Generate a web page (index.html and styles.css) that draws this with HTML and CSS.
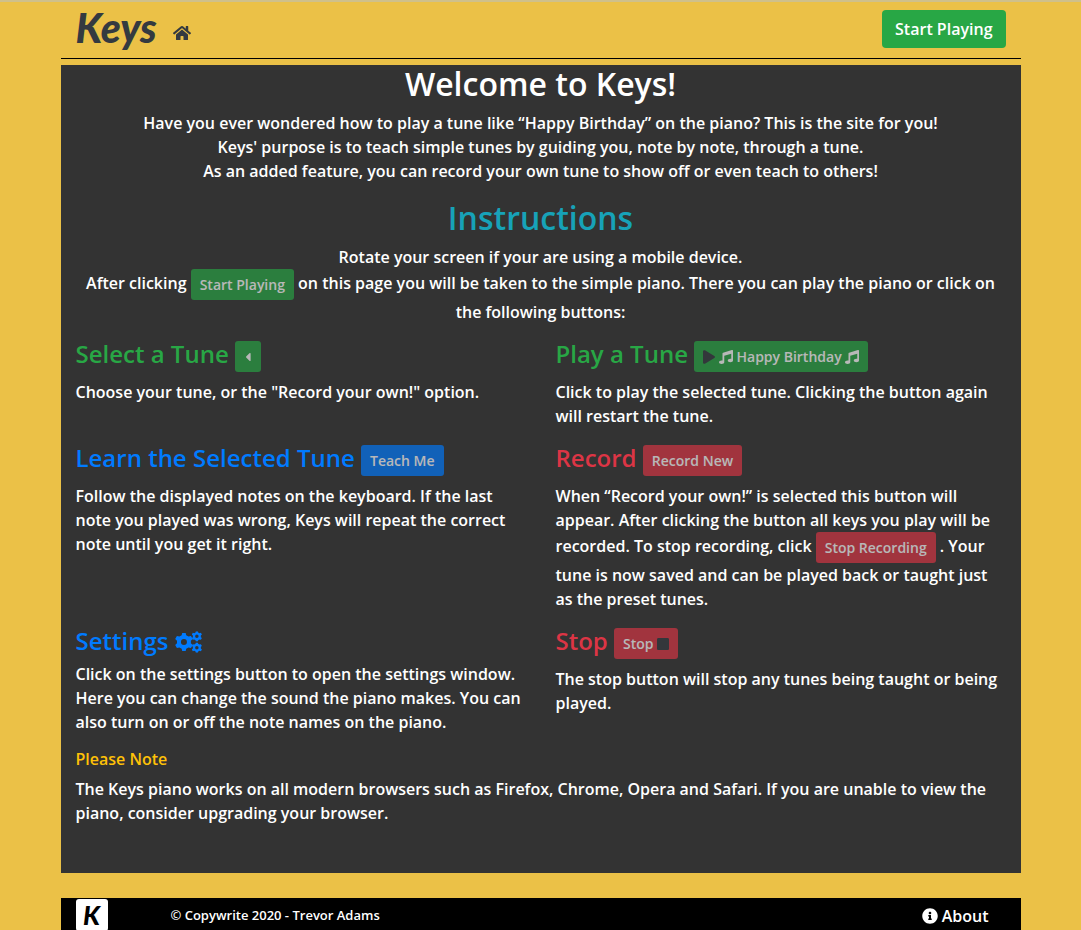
FILE: index.html
```html
<!DOCTYPE html>
<html lang="en">
<head>
<meta charset="utf-8">
<meta name="viewport" content="width=device-width, initial-scale=1">
<title>Keys</title>
<link rel="stylesheet" href="styles.css">
</head>
<body>
<svg class="sprite" aria-hidden="true">
  <symbol id="home" viewBox="0 0 576 512"><path d="M280.37 148.26L96 300.11V464a16 16 0 0 0 16 16l112.060-.29a16 16 0 0 0 15.920-16V368a16 16 0 0 1 16-16h64a16 16 0 0 1 16 16v95.640a16 16 0 0 0 16 16.050L464 480a16 16 0 0 0 16-16V300L295.670 148.260a12.190 12.190 0 0 0-15.300 0zM571.600 251.470L488 182.560V44.050a12 12 0 0 0-12-12h-56a12 12 0 0 0-12 12v72.610L318.470 43a48 48 0 0 0-61 0L4.340 251.470a12 12 0 0 0-1.600 16.900l25.500 31A12 12 0 0 0 45.150 301l235.220-193.740a12.190 12.190 0 0 1 15.300 0L530.900 301a12 12 0 0 0 16.900-1.600l25.500-31a12 12 0 0 0-1.700-16.930z"/></symbol>
  <symbol id="music" viewBox="0 0 512 512"><path d="M470.380 1.510L150.410 96A32 32 0 0 0 128 126.510v261.410A139 139 0 0 0 96 384c-53 0-96 28.660-96 64s43 64 96 64 96-28.660 96-64V214.320l256-75v184.610a138.400 138.400 0 0 0-32-3.930c-53 0-96 28.660-96 64s43 64 96 64 96-28.650 96-64V32a32 32 0 0 0-41.620-30.490z"/></symbol>
  <symbol id="play" viewBox="0 0 448 512"><path d="M424.400 214.700L72.400 6.600C43.800-10.300 0 6.100 0 47.900V464c0 37.500 40.700 60.100 72.400 41.300l352-208c31.400-18.500 31.500-64.100 0-82.600z"/></symbol>
  <symbol id="stop" viewBox="0 0 448 512"><path d="M400 32H48C21.500 32 0 53.500 0 80v352c0 26.500 21.500 48 48 48h352c26.500 0 48-21.500 48-48V80c0-26.500-21.500-48-48-48z"/></symbol>
  <symbol id="caret" viewBox="0 0 192 512"><path d="M192 127.300v257.400c0 17.800-21.500 26.700-34.100 14.100L29.200 270.100c-7.800-7.800-7.800-20.500 0-28.300l128.700-128.600c12.600-12.600 34.100-3.700 34.100 14.100z"/></symbol>
  <symbol id="info" viewBox="0 0 512 512"><path d="M256 8C119 8 8 119.100 8 256c0 137 111 248 248 248s248-111 248-248C504 119.100 393 8 256 8zm0 110c23.200 0 42 18.800 42 42s-18.800 42-42 42-42-18.800-42-42 18.800-42 42-42zm56 254c0 6.600-5.400 12-12 12h-88c-6.600 0-12-5.400-12-12v-24c0-6.600 5.400-12 12-12h12v-64h-12c-6.600 0-12-5.400-12-12v-24c0-6.600 5.400-12 12-12h64c6.600 0 12 5.400 12 12v100h12c6.600 0 12 5.400 12 12v24z"/></symbol>
  <symbol id="gear" viewBox="-98 -98 196 196"><path fill-rule="evenodd" d="M-19-98H19L25-73L50-59L77-67L96-33L76-15V15L96 33L77 67L50 59L25 73L19 98H-19L-25 73L-50 59L-77 67L-96 33L-76 15V-15L-96-33L-77-67L-50-59L-25-73ZM0-33A33 33 0 1 0 0 33A33 33 0 1 0 0-33Z"/></symbol>
  <symbol id="cogs" viewBox="0 0 640 512"><use href="#gear" x="0" y="44" width="424" height="424"/><use href="#gear" x="396" y="0" width="244" height="244"/><use href="#gear" x="396" y="268" width="244" height="244"/></symbol>
</svg>

<header class="container header">
  <a class="brand" href="#">Keys</a>
  <a class="home" href="#" aria-label="Home"><svg class="icon icon-home"><use href="#home"/></svg></a>
  <button class="btn btn-success start" type="button">Start Playing</button>
</header>

<main class="container main">
  <section class="intro">
    <h1 class="title">Welcome to Keys!</h1>
    <p>Have you ever wondered how to play a tune like “Happy Birthday” on the piano? This is the site for you!<br>Keys' purpose is to teach simple tunes by guiding you, note by note, through a tune.<br>As an added feature, you can record your own tune to show off or even teach to others!</p>
    <h2 class="title text-info">Instructions</h2>
    <p>Rotate your screen if your are using a mobile device.<br>After clicking <button class="btn btn-sm btn-success" type="button" disabled>Start Playing</button> on this page you will be taken to the simple piano. There you can play the piano or click on the following buttons:</p>
  </section>

  <div class="grid">
    <section>
      <h3 class="topic text-success">Select a Tune <button class="btn btn-sm btn-success" type="button" aria-label="Select a tune" disabled><svg class="icon icon-caret"><use href="#caret"/></svg></button></h3>
      <p>Choose your tune, or the "Record your own!" option.</p>
    </section>
    <section>
      <h3 class="topic text-success">Play a Tune <button class="btn btn-sm btn-success" type="button" disabled><svg class="icon icon-block dark"><use href="#play"/></svg> <svg class="icon icon-music"><use href="#music"/></svg> Happy Birthday <svg class="icon icon-music"><use href="#music"/></svg></button></h3>
      <p>Click to play the selected tune. Clicking the button again will restart the tune.</p>
    </section>
    <section>
      <h3 class="topic text-primary">Learn the Selected Tune <button class="btn btn-sm btn-primary" type="button" disabled>Teach Me</button></h3>
      <p>Follow the displayed notes on the keyboard. If the last note you played was wrong, Keys will repeat the correct note until you get it right.</p>
    </section>
    <section>
      <h3 class="topic text-danger">Record <button class="btn btn-sm btn-danger" type="button" disabled>Record New</button></h3>
      <p>When “Record your own!” is selected this button will appear. After clicking the button all keys you play will be recorded. To stop recording, click <button class="btn btn-sm btn-danger" type="button" disabled>Stop Recording</button> . Your tune is now saved and can be played back or taught just as the preset tunes.</p>
    </section>
    <section>
      <h3 class="topic text-primary">Settings <svg class="icon icon-cogs"><use href="#cogs"/></svg></h3>
      <p>Click on the settings button to open the settings window. Here you can change the sound the piano makes. You can also turn on or off the note names on the piano.</p>
    </section>
    <section>
      <h3 class="topic text-danger">Stop <button class="btn btn-sm btn-danger" type="button" disabled>Stop <svg class="icon icon-block dark"><use href="#stop"/></svg></button></h3>
      <p>The stop button will stop any tunes being taught or being played.</p>
    </section>
  </div>

  <h4 class="note text-warning">Please Note</h4>
  <p>The Keys piano works on all modern browsers such as Firefox, Chrome, Opera and Safari. If you are unable to view the piano, consider upgrading your browser.</p>
</main>

<footer class="container footer">
  <a class="badge" href="#">K</a>
  <small class="copy">© Copywrite 2020 - Trevor Adams</small>
  <a class="about" href="#"><svg class="icon icon-info"><use href="#info"/></svg> About</a>
</footer>
</body>
</html>
```
FILE: styles.css
```css
* { box-sizing: border-box; }

html {
  background: #ebc147;
}

body {
  margin: 0;
  height: 100vh;
  overflow: hidden;
  border-top: 2px solid #cfc08a;
  color: #fff;
  font: 600 16px/24px "Open Sans", "Noto Sans", sans-serif;
}

h1, h2, h3, h4, p { margin: 0; }
p { margin-bottom: 16px; }
a { color: inherit; text-decoration: none; }

.sprite { position: absolute; width: 0; height: 0; }

.container {
  width: 100%;
  max-width: 960px;
  margin: 0 auto;
  padding: 0 15px;
}

.header {
  display: flex;
  align-items: center;
  height: 57px;
  padding-bottom: 2px;
  border-bottom: 1px solid #000;
  color: #343a40;
}

.brand {
  padding-bottom: 3px;
  font: italic 900 41px/48px Lato, sans-serif;
}

.home { margin-left: 16px; padding-top: 8px; }
.start { margin-left: auto; }

.btn {
  padding: 6px 12px;
  border: 1px solid transparent;
  border-radius: 4px;
  color: #fff;
  font: inherit;
  text-align: center;
  vertical-align: middle;
}

.btn-sm {
  padding: 4px 8px;
  border-radius: 3px;
  font-size: 14px;
  line-height: 21px;
}

.btn:disabled { opacity: .65; }
.btn-success { background: #28a745; }
.btn-primary { background: #007bff; }
.btn-danger { background: #dc3545; }

.text-info { color: #17a2b8; }
.text-success { color: #28a745; }
.text-primary { color: #007bff; }
.text-danger { color: #dc3545; }
.text-warning { color: #ffc107; }

.icon {
  display: inline-block;
  height: 1em;
  fill: currentColor;
  vertical-align: -2px;
}

.icon-home { width: 18px; }
.icon-music { width: 14px; }
.icon-block { width: 12px; }
.icon-caret { width: 8px; }
.icon-cogs { width: 27px; height: 22px; vertical-align: -3px; }
.icon-info { width: 16px; }
.dark { color: #343a40; }

.main {
  margin-top: 6px;
  padding-bottom: 32px;
  background: #333;
}

.intro { text-align: center; }

.title {
  margin-bottom: 8px;
  font-size: 32px;
  font-weight: 600;
  line-height: 38px;
}

.grid {
  display: grid;
  grid-template-columns: 1fr 1fr;
  column-gap: 30px;
}

.topic {
  margin-bottom: 8px;
  font-size: 24px;
  font-weight: 600;
  line-height: 27px;
}

.note {
  margin-bottom: 8px;
  font-size: 16px;
  font-weight: 600;
  line-height: 19px;
}

.footer {
  display: flex;
  align-items: flex-start;
  margin-top: 25px;
  padding-top: 1px;
  padding-bottom: 8px;
  background: #000;
}

.badge {
  width: 32px;
  height: 32px;
  border-radius: 3px;
  background: #fff;
  color: #000;
  font: italic 900 26px/32px Lato, sans-serif;
  text-align: center;
}

.copy {
  margin-left: 63px;
  font-size: 13px;
  line-height: 32px;
}

.about {
  margin-left: auto;
  padding-right: 17px;
  line-height: 34px;
}
```
